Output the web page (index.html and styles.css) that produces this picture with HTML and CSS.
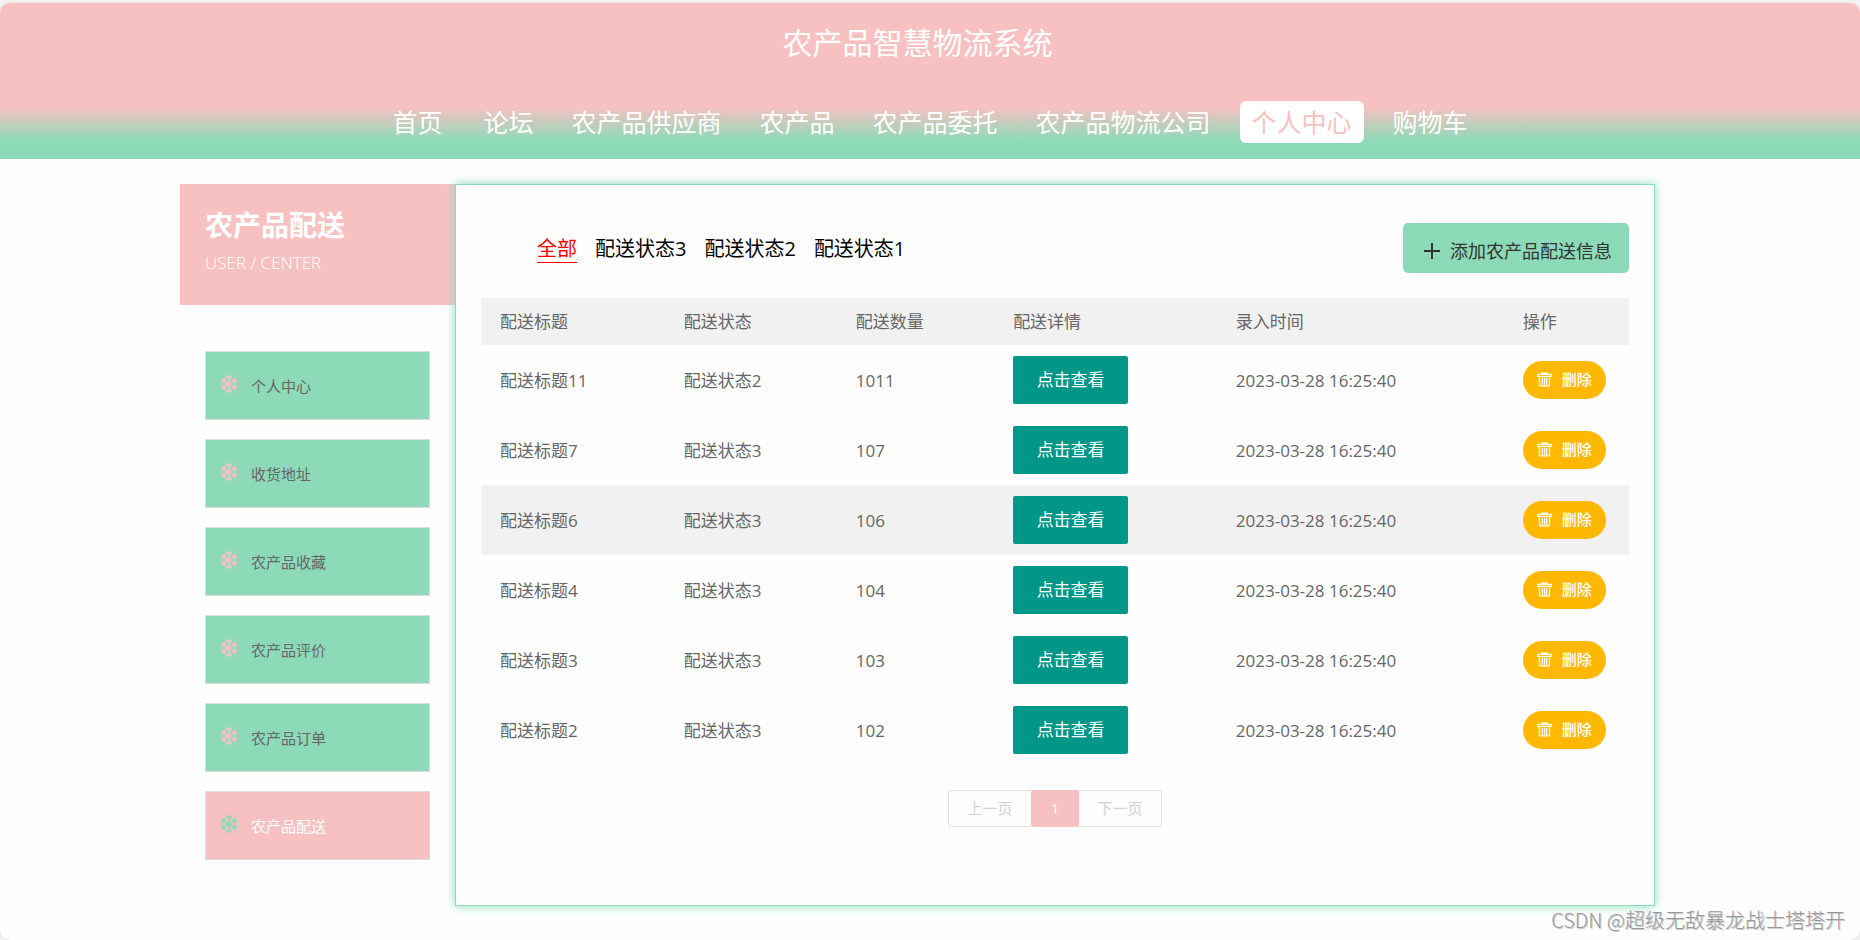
FILE: index.html
```html
<!DOCTYPE html>
<html lang="zh-CN">
<head>
<meta charset="utf-8">
<title>农产品智慧物流系统</title>
<link rel="stylesheet" href="styles.css">
</head>
<body>
<svg class="sprite" aria-hidden="true">
  <symbol id="snow" viewBox="0 0 16 18">
    <g fill="none" stroke="currentColor" stroke-width="1.9">
      <path d="M8 0v18M.4 4.700l15.200 8.600M.4 13.300l15.200-8.600"/>
      <path d="M5.300 1.200L8 3.600l2.700-2.400M5.300 16.800L8 14.400l2.700 2.400M.3 7.600l3.400-1L3 3M15.700 7.600l-3.400-1L13 3M.3 10.400l3.400 1L3 15M15.700 10.400l-3.400 1L13 15"/>
    </g>
  </symbol>
  <symbol id="trash" viewBox="0 0 16 16">
    <g fill="none" stroke="currentColor" stroke-width="1.400">
      <path d="M5 2.500V1.200h6v1.300M.8 2.600h14.400v2H.8zM2.600 4.600v9.200q0 1 1 1h8.800q1 0 1-1V4.600M5.700 6v7.500M8 6v7.500M10.300 6v7.500"/>
    </g>
  </symbol>
</svg>
<div class="page">
  <header class="header">
    <h1 class="site-title">农产品智慧物流系统</h1>
    <nav class="nav">
      <a class="nav-link nav-home" href="#">首页</a>
      <a class="nav-link" href="#">论坛</a>
      <a class="nav-link" href="#">农产品供应商</a>
      <a class="nav-link" href="#">农产品</a>
      <a class="nav-link" href="#">农产品委托</a>
      <a class="nav-link" href="#">农产品物流公司</a>
      <a class="nav-link active" href="#">个人中心</a>
      <a class="nav-link" href="#">购物车</a>
    </nav>
  </header>
  <div class="main">
    <aside class="sidebar">
      <div class="side-head">
        <h2 class="side-title">农产品配送</h2>
        <p class="side-sub">USER / CENTER</p>
      </div>
      <nav class="side-menu">
        <a class="side-link" href="#"><svg class="snow"><use href="#snow"/></svg><span>个人中心</span></a>
        <a class="side-link" href="#"><svg class="snow"><use href="#snow"/></svg><span>收货地址</span></a>
        <a class="side-link" href="#"><svg class="snow"><use href="#snow"/></svg><span>农产品收藏</span></a>
        <a class="side-link" href="#"><svg class="snow"><use href="#snow"/></svg><span>农产品评价</span></a>
        <a class="side-link" href="#"><svg class="snow"><use href="#snow"/></svg><span>农产品订单</span></a>
        <a class="side-link active" href="#"><svg class="snow"><use href="#snow"/></svg><span>农产品配送</span></a>
      </nav>
    </aside>
    <main class="card">
      <div class="toolbar">
        <div class="filters">
          <a class="filter active" href="#">全部</a>
          <a class="filter" href="#">配送状态3</a>
          <a class="filter" href="#">配送状态2</a>
          <a class="filter" href="#">配送状态1</a>
        </div>
        <button class="add" type="button"><svg class="plus" viewBox="0 0 16 16"><path d="M8 0v16M0 8h16" stroke="currentColor" stroke-width="2"/></svg><span>添加农产品配送信息</span></button>
      </div>
      <table class="table">
        <colgroup><col class="c1"><col class="c2"><col class="c3"><col class="c4"><col class="c5"><col class="c6"></colgroup>
        <thead>
          <tr><th>配送标题</th><th>配送状态</th><th>配送数量</th><th>配送详情</th><th>录入时间</th><th>操作</th></tr>
        </thead>
        <tbody>
          <tr><td>配送标题11</td><td>配送状态2</td><td>1011</td><td class="act"><button class="view" type="button">点击查看</button></td><td>2023-03-28 16:25:40</td><td class="act"><button class="del" type="button"><svg class="trash"><use href="#trash"/></svg>删除</button></td></tr>
          <tr><td>配送标题7</td><td>配送状态3</td><td>107</td><td class="act"><button class="view" type="button">点击查看</button></td><td>2023-03-28 16:25:40</td><td class="act"><button class="del" type="button"><svg class="trash"><use href="#trash"/></svg>删除</button></td></tr>
          <tr class="hover"><td>配送标题6</td><td>配送状态3</td><td>106</td><td class="act"><button class="view" type="button">点击查看</button></td><td>2023-03-28 16:25:40</td><td class="act"><button class="del" type="button"><svg class="trash"><use href="#trash"/></svg>删除</button></td></tr>
          <tr><td>配送标题4</td><td>配送状态3</td><td>104</td><td class="act"><button class="view" type="button">点击查看</button></td><td>2023-03-28 16:25:40</td><td class="act"><button class="del" type="button"><svg class="trash"><use href="#trash"/></svg>删除</button></td></tr>
          <tr><td>配送标题3</td><td>配送状态3</td><td>103</td><td class="act"><button class="view" type="button">点击查看</button></td><td>2023-03-28 16:25:40</td><td class="act"><button class="del" type="button"><svg class="trash"><use href="#trash"/></svg>删除</button></td></tr>
          <tr><td>配送标题2</td><td>配送状态3</td><td>102</td><td class="act"><button class="view" type="button">点击查看</button></td><td>2023-03-28 16:25:40</td><td class="act"><button class="del" type="button"><svg class="trash"><use href="#trash"/></svg>删除</button></td></tr>
        </tbody>
      </table>
      <div class="pager">
        <a class="page-link prev" href="#">上一页</a>
        <a class="page-link current" href="#">1</a>
        <a class="page-link next" href="#">下一页</a>
      </div>
    </main>
  </div>
  <div class="watermark">CSDN @超级无敌暴龙战士塔塔开</div>
</div>
</body>
</html>
```
FILE: styles.css
```css
* { box-sizing: border-box; }
body {
  margin: 0;
  padding-top: 3px;
  background: #f3f3f3;
  font-family: "Open Sans", "Noto Sans CJK SC", sans-serif;
  font-size: 17px;
  line-height: 24px;
  color: #666;
}
a { color: inherit; text-decoration: none; }
button { font: inherit; border: 0; padding: 0; cursor: pointer; }
h1, h2, p { margin: 0; }
.sprite { display: none; }
.page {
  position: relative;
  min-height: calc(100vh - 3px);
  background: #fefefe;
  border-radius: 10px;
  overflow: hidden;
  box-shadow: 0 0 2px #ccc;
}
.header {
  height: 156px;
  padding-top: 18px;
  background: linear-gradient(#f7c1c1 104px, #8cdab8 138px);
  color: #fff;
}
.site-title {
  padding-right: 25px;
  font-size: 30px;
  font-weight: 400;
  line-height: 44px;
  text-align: center;
}
.nav {
  display: flex;
  justify-content: center;
  gap: 14px;
  margin-top: 36px;
  font-size: 25px;
}
.nav-link { padding: 0 12px; line-height: 42px; border-radius: 6px; }
.nav-home { margin-right: 3px; }
.nav-link.active { margin: 0 3px; background: #fff; color: #f7c1c1; }
.main {
  display: flex;
  width: calc(100% - 385px);
  min-width: 1200px;
  margin: 25px 0 0 180px;
}
.sidebar { flex: 0 0 275px; }
.side-head {
  height: 121px;
  padding: 21px 25px;
  background: #f7c1c1;
  color: #fff;
}
.side-title { font-size: 28px; line-height: 40px; }
.side-sub { font-size: 17px; font-weight: 300; line-height: 36px; }
.side-menu {
  display: flex;
  flex-direction: column;
  gap: 19px;
  padding: 46px 25px 0;
}
.side-link {
  display: flex;
  align-items: center;
  gap: 14px;
  height: 69px;
  padding-left: 15px;
  border: 1px solid #ddd;
  background: #8cdab8;
  font-size: 15px;
}
.snow { width: 16px; height: 18px; margin-bottom: 3px; color: #f7c1c1; }
.side-link.active { background: #f7c1c1; color: #fff; }
.side-link.active .snow { color: #8cdab8; }
.card {
  flex: 1;
  min-height: 722px;
  padding: 38px 25px 78px;
  border: 1px solid #8cdab8;
  background: #fefefe;
  box-shadow: 0 0 10px #8cdab8;
}
.toolbar {
  display: flex;
  justify-content: space-between;
  align-items: center;
  height: 50px;
  padding-left: 56px;
}
.filters { display: flex; gap: 18px; font-size: 20px; color: #000; }
.filter { padding-top: 2px; line-height: 27px; border-bottom: 1px solid transparent; }
.filter.active { color: #f00; border-color: #f00; }
.add {
  display: flex;
  align-items: center;
  gap: 10px;
  height: 50px;
  padding: 6px 17px 0 21px;
  border-radius: 5px;
  background: #8cdab8;
  color: #333;
  font-size: 18px;
}
.plus { width: 16px; height: 16px; }
.table {
  width: 100%;
  margin-top: 25px;
  border-collapse: collapse;
  table-layout: fixed;
}
.c1 { width: 16%; }
.c2 { width: 15%; }
.c3 { width: 13.700%; }
.c4 { width: 19.400%; }
.c5 { width: 25%; }
.c6 { width: 10.900%; }
th, td { padding: 0 0 0 19px; text-align: left; font-weight: 400; }
th { height: 47px; background: #f1f1f1; }
td { height: 70px; padding-top: 2px; }
.act { padding-top: 0; }
.hover { background: #f1f1f1; }
.view {
  display: block;
  width: 115px;
  height: 48px;
  border-radius: 2px;
  background: #009688;
  color: #fff;
}
.del {
  display: flex;
  align-items: center;
  justify-content: center;
  gap: 10px;
  width: 83px;
  height: 38px;
  padding-bottom: 2px;
  border-radius: 19px;
  background: #ffb800;
  color: #fff;
  font-size: 15px;
  font-weight: 500;
}
.trash { width: 15px; height: 15px; }
.pager {
  display: flex;
  justify-content: center;
  margin-top: 25px;
  font-size: 15px;
  color: #d2d2d2;
}
.page-link {
  width: 83px;
  border: 1px solid #e2e2e2;
  line-height: 35px;
  text-align: center;
}
.prev { border-right: 0; border-radius: 3px 0 0 3px; }
.next { border-left: 0; border-radius: 0 3px 3px 0; }
.current {
  width: 48px;
  border-color: #f7c1c1;
  border-radius: 2px;
  background: #f7c1c1;
  color: #fff;
}
.watermark {
  position: absolute;
  right: 15px;
  bottom: 8px;
  font-family: "Noto Sans CJK SC", sans-serif;
  font-size: 20px;
  font-weight: 300;
  color: #999;
  text-shadow: 1px 1px 0 #ccc;
}
```
